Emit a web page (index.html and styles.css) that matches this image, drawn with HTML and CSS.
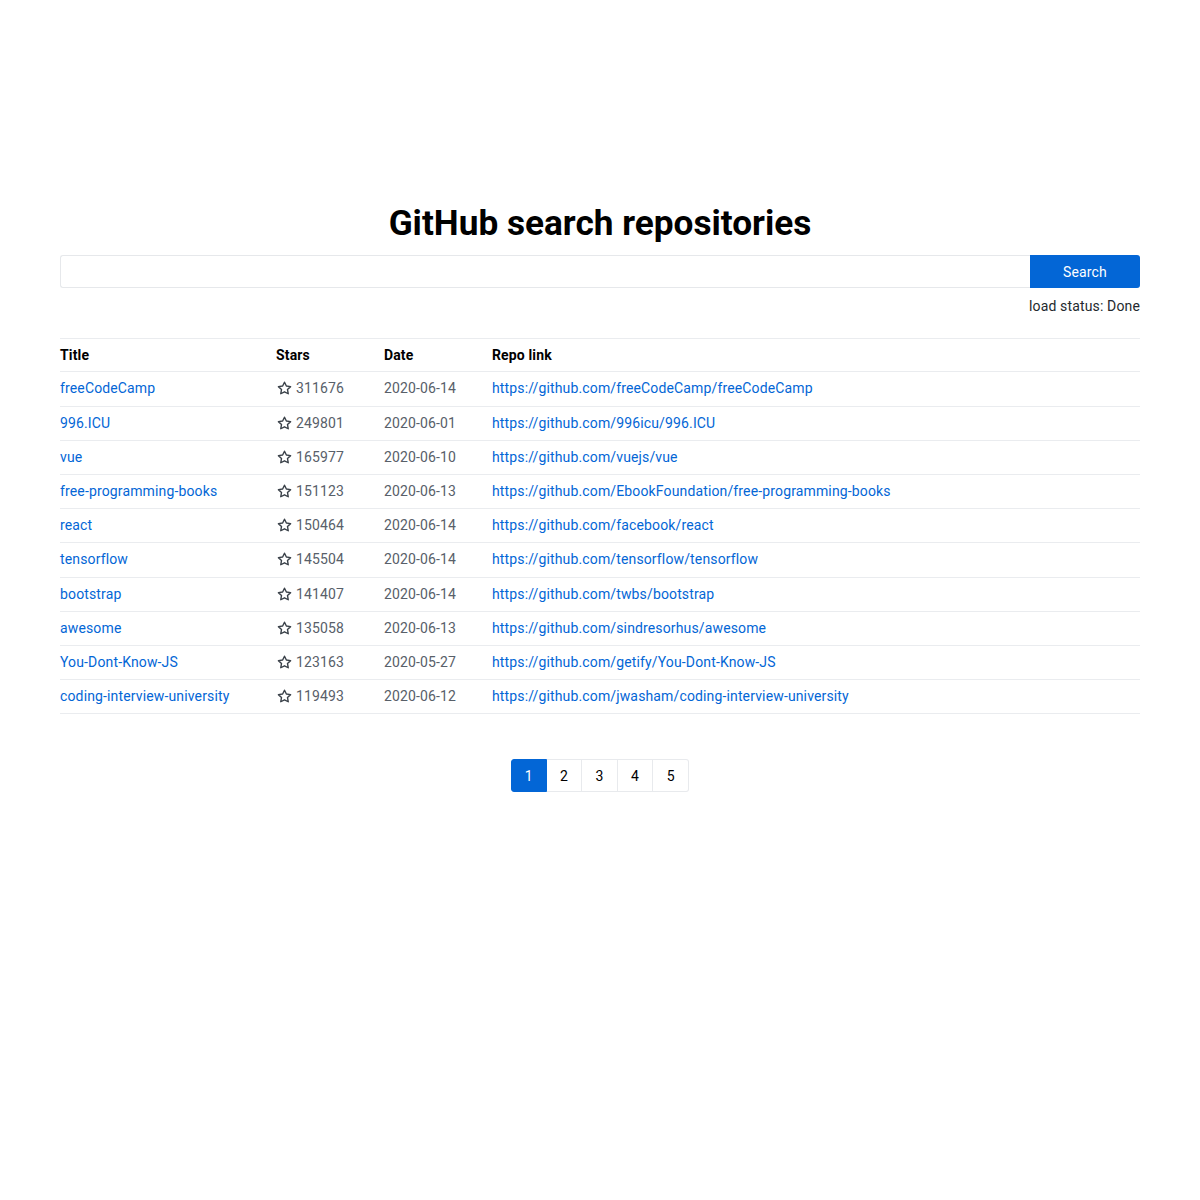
FILE: index.html
```html
<!DOCTYPE html>
<html>
<head>
<meta charset="utf-8">
<link rel="stylesheet" href="styles.css">
</head>
<body>
<div class="app">
  <h1 class="title">GitHub search repositories</h1>
  <form class="search">
    <input class="search-input" type="text">
    <button class="search-btn" type="button">Search</button>
  </form>
  <div class="status">load status: Done</div>
  <table class="repos">
    <colgroup><col class="c-title"><col class="c-stars"><col class="c-date"><col class="c-link"></colgroup>
    <thead><tr><th>Title</th><th>Stars</th><th>Date</th><th>Repo link</th></tr></thead>
    <tbody id="rows"></tbody>
  </table>
  <div class="pager">
    <span class="page active">1</span><span class="page">2</span><span class="page">3</span><span class="page">4</span><span class="page">5</span>
  </div>
</div>
<script>
var data = [
["freeCodeCamp","311676","2020-06-14","freeCodeCamp/freeCodeCamp"],
["996.ICU","249801","2020-06-01","996icu/996.ICU"],
["vue","165977","2020-06-10","vuejs/vue"],
["free-programming-books","151123","2020-06-13","EbookFoundation/free-programming-books"],
["react","150464","2020-06-14","facebook/react"],
["tensorflow","145504","2020-06-14","tensorflow/tensorflow"],
["bootstrap","141407","2020-06-14","twbs/bootstrap"],
["awesome","135058","2020-06-13","sindresorhus/awesome"],
["You-Dont-Know-JS","123163","2020-05-27","getify/You-Dont-Know-JS"],
["coding-interview-university","119493","2020-06-12","jwasham/coding-interview-university"]
];
var star = '<svg class="star" viewBox="0 0 16 16" width="15" height="15"><path fill="none" stroke="#3a4149" stroke-width="1.5" stroke-linejoin="round" d="M8 1.3l2 4.1 4.5.6-3.3 3.1.8 4.5L8 11.5l-4 2.1.8-4.5L1.5 6l4.5-.6z"/></svg>';
var html = "";
data.forEach(function(r){
  var url = "https://github.com/" + r[3];
  html += '<tr><td><a href="#">' + r[0] + '</a></td><td class="muted">' + star + '<span class="num">' + r[1] + '</span></td><td class="muted">' + r[2] + '</td><td><a href="#">' + url + '</a></td></tr>';
});
document.getElementById("rows").innerHTML = html;
</script>
</body>
</html>
```
FILE: styles.css
```css
html, body { margin: 0; padding: 0; background: #fff; }
body { font-family: Roboto, "Liberation Sans", sans-serif; color: #000; font-size: 14px; }
.app { width: 1080px; margin: 0 auto; padding-top: 202px; }
.title { margin: 0 0 11px; font-size: 35.2px; line-height: 42px; font-weight: 700; text-align: center; }
.search { display: flex; margin: 0; }
.search-input { flex: 1; height: 33px; box-sizing: border-box; border: 1px solid #e6e8eb; border-right: none; border-radius: 3px 0 0 3px; outline: none; padding: 0 8px; font: inherit; }
.search-btn { width: 110px; height: 33px; border: none; background: #0366d6; color: #fff; font: inherit; font-size: 14px; letter-spacing: 0.15px; border-radius: 0 3px 3px 0; padding: 0; }
.status { text-align: right; margin-top: 10px; line-height: 16px; color: #24292e; letter-spacing: 0.15px; }
.repos { width: 100%; border-collapse: collapse; table-layout: fixed; margin-top: 24px; border-top: 1px solid #eaecef; letter-spacing: 0.14px; }
.c-title { width: 216px; } .c-stars { width: 108px; } .c-date { width: 108px; }
.repos th, .repos td { text-align: left; padding: 6.1px 0 7.1px; line-height: 20px; border-bottom: 1px solid #eaecef; white-space: nowrap; }
.repos th { font-weight: 700; color: #000; padding: 5.6px 0 6.8px; }
.repos a { color: #0366d6; text-decoration: none; }
.muted { color: #586069; }
.star { vertical-align: -3px; margin-left: 1px; margin-right: 4px; }
.pager { display: flex; justify-content: center; margin-top: 45px; }
.page { width: 35.6px; height: 33px; box-sizing: border-box; display: flex; align-items: center; justify-content: center; border: 1px solid #e8eaed; border-left: none; color: #000; letter-spacing: 0.15px; }
.page:first-child { border-left: 1px solid #0366d6; border-radius: 3px 0 0 3px; }
.page:last-child { border-radius: 0 3px 3px 0; }
.page.active { background: #0366d6; border-color: #0366d6; color: #fff; }
```
